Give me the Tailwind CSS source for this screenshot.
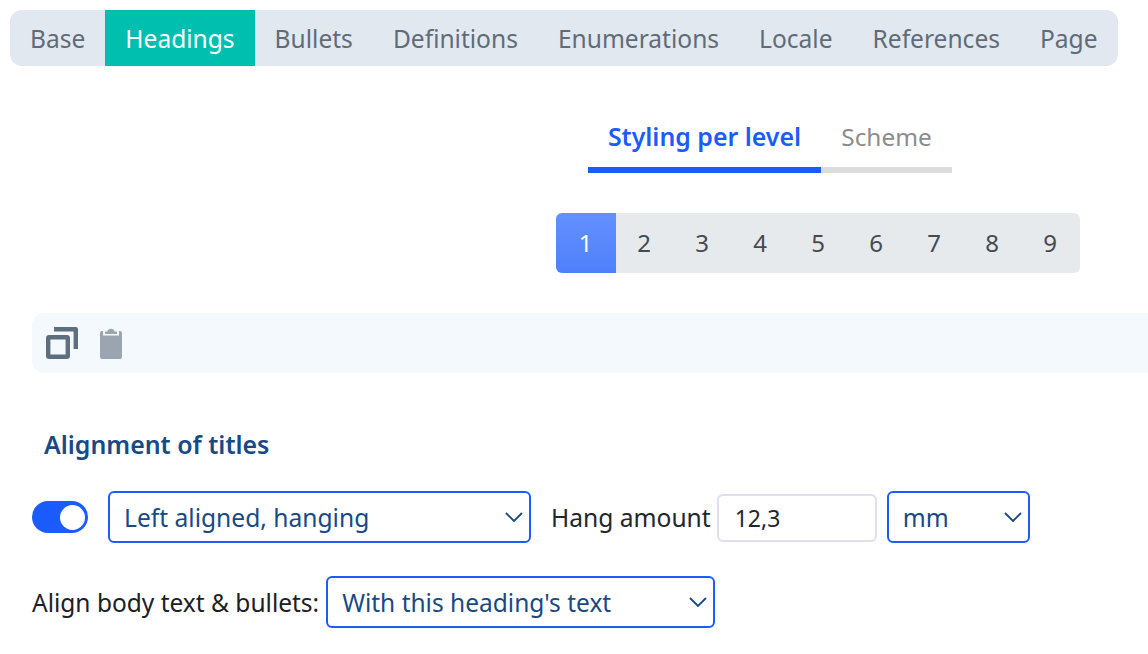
<!doctype html>
<html lang="en">
<head>
<meta charset="utf-8">
<title>Headings</title>
<script src="https://cdn.jsdelivr.net/npm/@tailwindcss/browser@4"></script>
</head>
<body class="bg-white overflow-hidden font-['Noto_Sans',sans-serif]">
  <div class="w-[1148px] h-[654px] overflow-hidden pt-[10px]">
    <!-- main tabs -->
    <nav class="ml-[10px] w-[1108px] h-[56px] flex rounded-[12px] bg-[#e2e8f0] text-[24.55px] text-[#5f6c77] overflow-hidden">
      <a class="px-[20px] leading-[58px]">Base</a>
      <a class="px-[20px] leading-[58px] bg-[#00bfae] text-white">Headings</a>
      <a class="px-[20px] leading-[58px]">Bullets</a>
      <a class="px-[20px] leading-[58px]">Definitions</a>
      <a class="px-[20px] leading-[58px]">Enumerations</a>
      <a class="px-[20px] leading-[58px]">Locale</a>
      <a class="px-[20px] leading-[58px]">References</a>
      <a class="px-[20px] leading-[58px]">Page</a>
    </nav>

    <!-- sub tabs -->
    <div class="ml-[588px] mt-[51px] flex h-[56px]">
      <a class="w-[233px] text-center text-[24.9px] font-semibold text-[#1a5cff] border-b-[6px] border-[#1a5cff] leading-[38px]">Styling per level</a>
      <a class="w-[131px] text-center text-[24.4px] text-[#8c8c8c] border-b-[6px] border-[#dcdcdc] leading-[40px]">Scheme</a>
    </div>

    <!-- level picker -->
    <div class="ml-[556px] mt-[40px] w-[524px] h-[60px] flex rounded-[6px] bg-[#e7eaed] text-[24px] text-[#454a4f] overflow-hidden">
      <span class="w-[60px] pr-[1px] leading-[59px] text-center text-white bg-linear-to-b from-[#6490ff] to-[#4f80fb]">1</span>
      <span class="w-[58px] pr-[2px] leading-[59px] text-center">2</span>
      <span class="w-[58px] pr-[2px] leading-[59px] text-center">3</span>
      <span class="w-[58px] pr-[2px] leading-[59px] text-center">4</span>
      <span class="w-[58px] pr-[2px] leading-[59px] text-center">5</span>
      <span class="w-[58px] pr-[2px] leading-[59px] text-center">6</span>
      <span class="w-[58px] pr-[2px] leading-[59px] text-center">7</span>
      <span class="w-[58px] pr-[2px] leading-[59px] text-center">8</span>
      <span class="w-[58px] pr-[2px] leading-[59px] text-center">9</span>
    </div>

    <!-- copy / paste toolbar -->
    <div class="ml-[32px] mt-[40px] w-[1130px] h-[60px] flex items-center rounded-l-[12px] bg-[#f4f9fd] pl-[14px] gap-[22px]">
      <svg class="w-[32px] h-[32px]" viewBox="0 0 32 32" fill="none" stroke="#5d6e7e" stroke-width="4.400">
        <path d="M8 2.200h21.800V22" stroke-linejoin="round"/>
        <rect x="2.200" y="10.200" width="19.600" height="19.600" rx="1"/>
      </svg>
      <svg class="w-[22px] h-[32px]" viewBox="0 0 22 32" fill="#9aa5b1">
        <path d="M2 4h18a2 2 0 0 1 2 2v24a2 2 0 0 1-2 2H2a2 2 0 0 1-2-2V6a2 2 0 0 1 2-2z"/>
        <path d="M3 3h16v5.500H3z" fill="#f4f9fd"/>
        <path d="M5 7V4.500h2.400a3.700 3.700 0 0 1 7.200 0H17V7z"/>
      </svg>
    </div>

    <h3 class="ml-[44px] mt-[53px] text-[24.9px] leading-[36px] font-semibold text-[#174a85]">Alignment of titles</h3>

    <!-- alignment row -->
    <div class="ml-[32px] mt-[29px] flex items-center h-[52px] text-[24.6px]">
      <span class="w-[56px] h-[32px] rounded-full bg-[#1a5cff] flex items-center justify-end pr-[3px]">
        <span class="w-[25px] h-[25px] rounded-full bg-white"></span>
      </span>
      <div class="ml-[20px] w-[423px] h-[52px] flex items-center justify-between rounded-[6px] border-2 border-[#1a5cff] pl-[14px] pr-[6px] text-[#174a85]">
        <span class="pt-[2px]">Left aligned, hanging</span>
        <svg class="w-[18px] h-[10px]" viewBox="0 0 18 10" fill="none" stroke="#174a85" stroke-width="1.800"><path d="M1 1l8 8 8-8"/></svg>
      </div>
      <span class="ml-[20px] pt-[2px] text-[#22272c]">Hang amount</span>
      <div class="ml-[6px] mt-[2px] w-[160px] h-[48px] flex items-center rounded-[6px] border-2 border-[#dfdfef] pl-[16px] text-[23px] text-[#22272c]">12,3</div>
      <div class="ml-[10px] w-[143px] h-[52px] flex items-center justify-between rounded-[6px] border-2 border-[#1a5cff] pl-[14px] pr-[6px] text-[#174a85]">
        <span class="pt-[2px]">mm</span>
        <svg class="w-[18px] h-[10px]" viewBox="0 0 18 10" fill="none" stroke="#174a85" stroke-width="1.800"><path d="M1 1l8 8 8-8"/></svg>
      </div>
    </div>

    <!-- body text row -->
    <div class="ml-[32px] mt-[33px] flex items-center h-[52px] text-[24.5px]">
      <span class="pt-[2px] text-[#1c2024]">Align body text &amp; bullets:</span>
      <div class="ml-[7px] w-[389px] h-[52px] flex items-center justify-between rounded-[6px] border-2 border-[#1a5cff] pl-[14px] pr-[6px] text-[#174a85]">
        <span class="pt-[2px]">With this heading's text</span>
        <svg class="w-[18px] h-[10px]" viewBox="0 0 18 10" fill="none" stroke="#174a85" stroke-width="1.800"><path d="M1 1l8 8 8-8"/></svg>
      </div>
    </div>
  </div>
</body>
</html>
